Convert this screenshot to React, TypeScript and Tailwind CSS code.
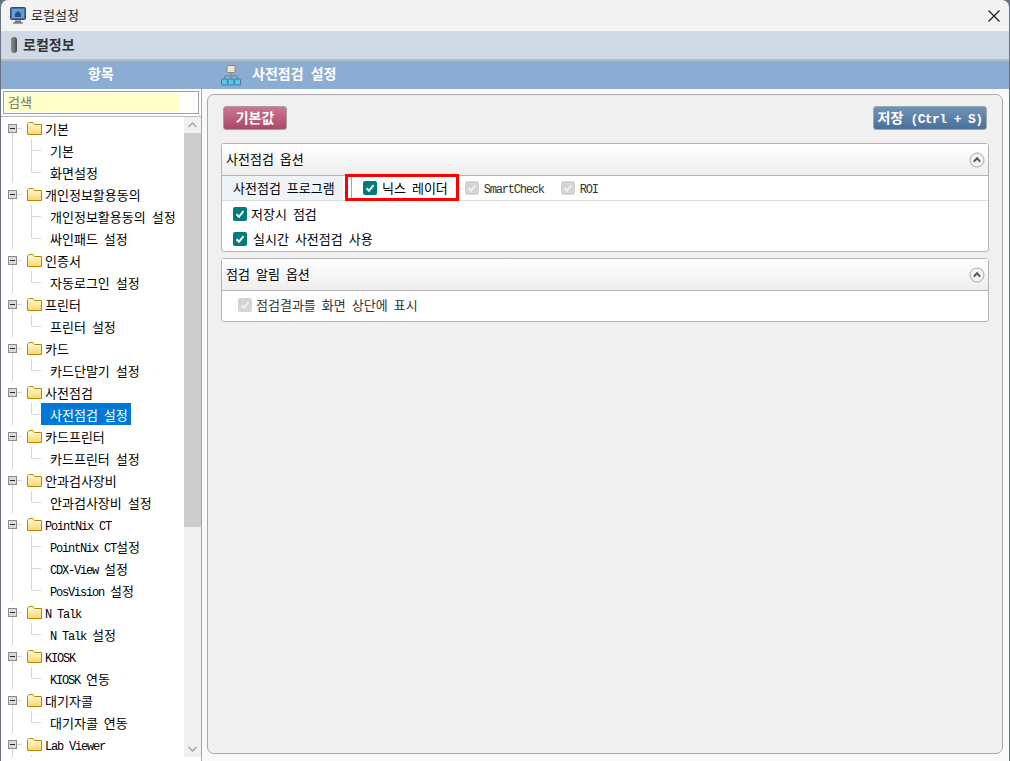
import { Fragment } from "react";

type TreeGroup = { name: string; items: string[] };

const groups: TreeGroup[] = [
  { name: "기본", items: ["기본", "화면설정"] },
  { name: "개인정보활용동의", items: ["개인정보활용동의 설정", "싸인패드 설정"] },
  { name: "인증서", items: ["자동로그인 설정"] },
  { name: "프린터", items: ["프린터 설정"] },
  { name: "카드", items: ["카드단말기 설정"] },
  { name: "사전점검", items: ["사전점검 설정"] },
  { name: "카드프린터", items: ["카드프린터 설정"] },
  { name: "안과검사장비", items: ["안과검사장비 설정"] },
  { name: "PointNix CT", items: ["PointNix CT설정", "CDX-View 설정", "PosVision 설정"] },
  { name: "N Talk", items: ["N Talk 설정"] },
  { name: "KIOSK", items: ["KIOSK 연동"] },
  { name: "대기자콜", items: ["대기자콜 연동"] },
  { name: "Lab Viewer", items: [""] },
];

// hangul and latin have different advances in the original bitmap font
function Txt({ children }: { children: string }) {
  const parts = children.split(/([가-힣]+)/).filter(Boolean);
  return (
    <span className="whitespace-pre">
      {parts.map((p, i) =>
        /[가-힣]/.test(p) ? (
          <span key={i} className="font-['Noto_Sans_CJK_KR',sans-serif] text-[13px]">
            {p}
          </span>
        ) : (
          <span key={i} className="font-['Liberation_Mono',monospace] text-[12px] tracking-[-1.2px]">
            {p}
          </span>
        )
      )}
    </span>
  );
}

function BoldTxt({ children }: { children: string }) {
  const parts = children.split(/([가-힣]+)/).filter(Boolean);
  return (
    <span className="whitespace-pre font-bold">
      {parts.map((p, i) =>
        /[가-힣]/.test(p) ? (
          <span key={i} className="font-['Noto_Sans_CJK_KR',sans-serif] text-[14px]">
            {p}
          </span>
        ) : (
          <span key={i} className="font-['Liberation_Mono',monospace] text-[13px] tracking-[-0.6px]">
            {p}
          </span>
        )
      )}
    </span>
  );
}

function Folder() {
  return (
    <svg x="26" y="5" width="15" height="13" viewBox="0 0 15 13">
      <defs>
        <linearGradient id="fold" x1="0" y1="0" x2="0" y2="1">
          <stop offset="0" stopColor="#fffbe0" />
          <stop offset="1" stopColor="#f7d768" />
        </linearGradient>
      </defs>
      <path d="M0.5 12.5V2l1.5-1.5h4L7.5 2.5h7v10z" fill="url(#fold)" stroke="#b8860b" />
    </svg>
  );
}

function GroupRow({ name }: { name: string }) {
  return (
    <div className="flex h-[22px] items-center">
      <svg width="44" height="22" className="shrink-0">
        <path d="M11.5 16V22M16 11.5H21" stroke="#d8d8d8" fill="none" />
        <rect x="7.5" y="7.5" width="8" height="8" fill="#dcdcdc" stroke="#8a8a8a" />
        <path d="M9 11.5H14" stroke="#222" />
        <Folder />
      </svg>
      <Txt>{name}</Txt>
    </div>
  );
}

function ItemRow({ name, last, selected }: { name: string; last: boolean; selected: boolean }) {
  return (
    <div className="flex h-[22px] items-center">
      <svg width="40" height="22" className="shrink-0">
        <path d="M11.5 0V22" stroke="#d8d8d8" />
        <path d={last ? "M30.5 0V11.5H40" : "M30.5 0V22M30.5 11.5H40"} stroke="#d8d8d8" fill="none" />
      </svg>
      <div className={selected ? "flex h-[22px] items-center bg-[#0078d7] pl-[9px] pr-[3px] text-white" : "pl-[9px]"}>
        <Txt>{name}</Txt>
      </div>
    </div>
  );
}

function Check({ disabled }: { disabled?: boolean }) {
  return (
    <span
      className={
        disabled
          ? "flex h-[14px] w-[14px] shrink-0 items-center justify-center rounded-[2px] bg-[#d4d4d4]"
          : "flex h-[14px] w-[14px] shrink-0 items-center justify-center rounded-[2px] bg-[#007c7c]"
      }
    >
      <svg width="10" height="10" viewBox="0 0 10 10">
        <path
          d="M1.5 5.2L4 7.8L8.5 2.2"
          fill="none"
          stroke={disabled ? "#efefef" : "#fff"}
          strokeWidth="2"
        />
      </svg>
    </span>
  );
}

function CheckLabel({ label, disabled, gap }: { label: string; disabled?: boolean; gap: string }) {
  return (
    <div className={"flex items-center " + gap}>
      <Check disabled={disabled} />
      <span className={disabled ? "-translate-y-px text-[#333]" : "-translate-y-px text-black"}>
        <Txt>{label}</Txt>
      </span>
    </div>
  );
}

function SectionHeader({ title, pad }: { title: string; pad: string }) {
  return (
    <div className={"flex h-[32px] items-center justify-between border-b border-[#b4b4b4] bg-gradient-to-b from-white to-[#eeeeee] pr-[3px] " + pad}>
      <span className="-translate-y-[2px]">
        <Txt>{title}</Txt>
      </span>
      <svg width="16" height="16" viewBox="0 0 16 16">
        <circle cx="8" cy="8" r="7" fill="#f4f4f4" stroke="#a8a8a8" />
        <path d="M4.8 9.6L8 6.2L11.2 9.6" fill="none" stroke="#555" strokeWidth="2" />
      </svg>
    </div>
  );
}

function TitleIcon() {
  return (
    <svg width="16" height="17" viewBox="0 0 16 17">
      <rect x="0.5" y="0.5" width="15" height="12" rx="1" fill="#4a6f9a" stroke="#34495e" />
      <rect x="2" y="2" width="12" height="9" fill="#5aa0e0" />
      <path d="M5 10V6.5L8 4l3 2.5V10z" fill="#28507c" />
      <path d="M5 13.5h6v2H5z" fill="#6b7480" />
      <path d="M3 15.5h10v1H3z" fill="#34495e" />
    </svg>
  );
}

function NetworkIcon() {
  return (
    <svg width="20" height="21" viewBox="0 0 20 21">
      <rect x="6" y="0.5" width="8" height="7" rx="1" fill="#efe6c8" stroke="#8a8a7a" />
      <path d="M10 8V11M3.5 14V11H16.5V14M10 11V14" fill="none" stroke="#5f8fa8" />
      <rect x="0.5" y="14" width="6" height="6" rx="1" fill="#55c8ee" stroke="#3d7f9c" />
      <rect x="7" y="14" width="6" height="6" rx="1" fill="#55c8ee" stroke="#3d7f9c" />
      <rect x="13.5" y="14" width="6" height="6" rx="1" fill="#55c8ee" stroke="#3d7f9c" />
    </svg>
  );
}

export default function App() {
  return (
    <div className="h-[761px] w-[1010px] overflow-hidden bg-[#6b7280]">
      <div className="mx-px flex h-[761px] flex-col overflow-hidden rounded-t-[7px] bg-[#f3f3f3] text-black">
        <div className="flex h-[31px] shrink-0 items-center pl-[9px] pr-[9px]">
          <TitleIcon />
          <span className="ml-[5px] -translate-y-[2px] text-[#222]">
            <Txt>로컬설정</Txt>
          </span>
          <svg width="12" height="12" viewBox="0 0 12 12" className="ml-auto">
            <path d="M0.5 0.5L11.5 11.5M11.5 0.5L0.5 11.5" stroke="#111" strokeWidth="1.1" />
          </svg>
        </div>

        <div className="flex h-[30px] shrink-0 items-center border-b-2 border-[#b5bcc4] bg-[#d0dae6] pl-[10px] text-[#333]">
          <span className="h-[16px] w-[6px] rounded-[3px] bg-gradient-to-r from-[#8a8a8a] via-[#777] to-[#4a4a4a]" />
          <span className="ml-[6px] -translate-y-px">
            <BoldTxt>로컬정보</BoldTxt>
          </span>
        </div>

        <div className="flex h-[28px] shrink-0 items-center bg-[#8cadd3] text-white">
          <div className="w-[200px] -translate-y-[2px] text-center">
            <BoldTxt>항목</BoldTxt>
          </div>
          <div className="ml-[20px] flex items-center gap-[11px]">
            <NetworkIcon />
            <span className="-translate-y-[2px]">
              <BoldTxt>사전점검 설정</BoldTxt>
            </span>
          </div>
        </div>

        <div className="flex min-h-0 flex-1">
          <div className="flex w-[201px] shrink-0 flex-col border-r border-[#8cadd3] bg-white pb-[4px]">
            <div className="px-[2px] pb-[2px] pt-[2px]">
              <div className="flex h-[23px] border border-[#a0a0a0] bg-white p-px">
                <div className="flex w-[174px] items-center bg-[#ffffc8] pl-[3px] text-[#777]">
                  <span className="-translate-y-[2px]">
                    <Txt>검색</Txt>
                  </span>
                </div>
              </div>
            </div>
            <div className="flex min-h-0 flex-1 border-t border-[#b8b8b8]">
              <div className="min-w-0 flex-1 overflow-hidden">
                {groups.map((g) => (
                  <Fragment key={g.name}>
                    <GroupRow name={g.name} />
                    {g.items.map((it, i) => (
                      <ItemRow
                        key={it}
                        name={it}
                        last={i === g.items.length - 1}
                        selected={it === "사전점검 설정"}
                      />
                    ))}
                  </Fragment>
                ))}
              </div>
              <div className="flex w-[17px] shrink-0 flex-col bg-[#f0f0f0]">
                <div className="flex h-[16px] items-center justify-center">
                  <svg width="9" height="6" viewBox="0 0 9 6">
                    <path d="M0.5 5L4.5 1L8.5 5" fill="none" stroke="#a0a0a0" strokeWidth="1.3" />
                  </svg>
                </div>
                <div className="h-[394px] bg-[#cdcdcd]" />
                <div className="mt-auto flex h-[16px] items-center justify-center">
                  <svg width="9" height="6" viewBox="0 0 9 6">
                    <path d="M0.5 1L4.5 5L8.5 1" fill="none" stroke="#a0a0a0" strokeWidth="1.3" />
                  </svg>
                </div>
              </div>
            </div>
          </div>

          <div className="min-w-0 flex-1 bg-[#fafafa] pb-[7px] pl-[5px] pr-[6px] pt-[5px]">
            <div className="h-full rounded-[7px] border border-[#a8a8a8] bg-[#f0f0f0] px-[13px] pt-[11px]">
              <div className="flex justify-between pl-[2px] pr-[2px]">
                <button className="h-[24px] w-[64px] rounded-[3px] border border-[#a99] bg-gradient-to-b from-[#cc7490] to-[#a94a68] text-white">
                  <span className="inline-block -translate-y-[2px]">
                    <BoldTxt>기본값</BoldTxt>
                  </span>
                </button>
                <button className="h-[24px] w-[114px] rounded-[3px] border border-[#9aa] bg-gradient-to-b from-[#6f93bb] to-[#4a6f9a] text-white">
                  <span className="inline-block -translate-y-[2px]">
                    <BoldTxt>저장 (Ctrl + S)</BoldTxt>
                  </span>
                </button>
              </div>

              <div className="mt-[13px] rounded-[3px] border border-[#b4b4b4] bg-white">
                <SectionHeader title="사전점검 옵션" pad="pl-[4px]" />
                <div className="relative flex h-[25px] items-center border-b border-[#dcdcdc]">
                  <div className="flex h-full w-[121px] items-center bg-[#eef3f8] pl-[11px]">
                    <span className="-translate-y-px">
                      <Txt>사전점검 프로그램</Txt>
                    </span>
                  </div>
                  <div className="ml-[8px] flex h-full items-center border-l border-[#a8a8a8] pl-[11px]">
                    <CheckLabel label="닉스 레이더" gap="gap-[5px]" />
                    <div className="ml-[17px]">
                      <CheckLabel label="SmartCheck" disabled gap="gap-[5px]" />
                    </div>
                    <div className="ml-[17px]">
                      <CheckLabel label="ROI" disabled gap="gap-[5px]" />
                    </div>
                  </div>
                  {/* red annotation drawn over the screenshot */}
                  <div className="absolute left-[123px] top-[-2px] h-[27px] w-[114px] border-[3px] border-[#ff0000]" />
                </div>
                <div className="flex h-[25px] items-center pl-[11px]">
                  <CheckLabel label="저장시 점검" gap="gap-[4px]" />
                </div>
                <div className="flex h-[25px] items-center pl-[11px]">
                  <CheckLabel label="실시간 사전점검 사용" gap="gap-[6px]" />
                </div>
              </div>

              <div className="mt-[6px] rounded-[3px] border border-[#b4b4b4] bg-white">
                <SectionHeader title="점검 알림 옵션" pad="pl-[4px]" />
                <div className="flex h-[30px] items-center pb-[2px] pl-[16px]">
                  <CheckLabel label="점검결과를 화면 상단에 표시" disabled gap="gap-[4px]" />
                </div>
              </div>
            </div>
          </div>
        </div>
      </div>
    </div>
  );
}
